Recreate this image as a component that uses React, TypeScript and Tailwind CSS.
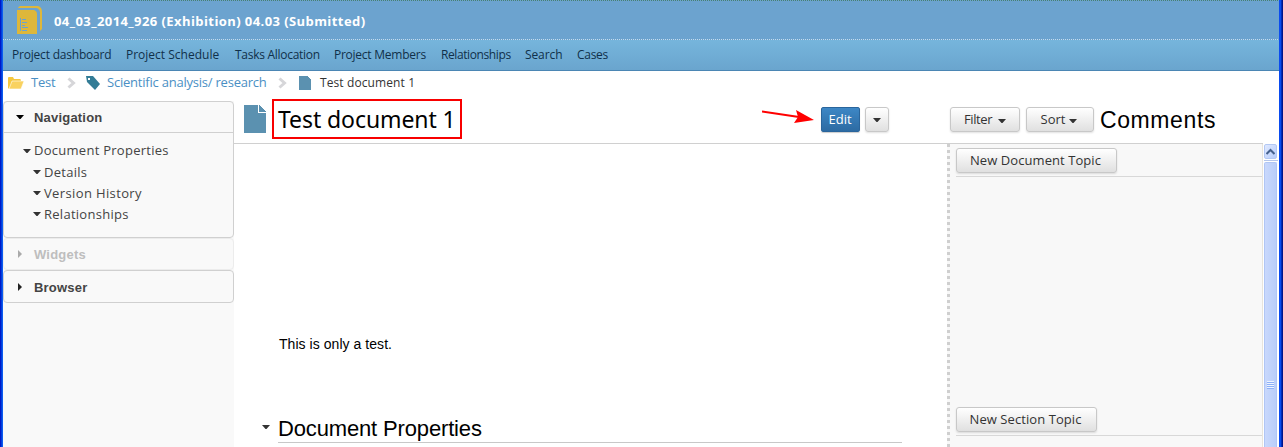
import React from "react";

const DocIcon = ({ className }: { className: string }) => (
  <svg className={className} viewBox="0 0 22 28" preserveAspectRatio="none" fill="#5b91b0" shapeRendering="crispEdges">
    <path d="M0 0H14V8H22V28H0ZM15 0L22 7H15Z" />
  </svg>
);

const Caret = ({ className = "", fill = "#333" }: { className?: string; fill?: string }) => (
  <svg className={`h-1 w-[8px] shrink-0 ${className}`} viewBox="0 0 8 4" fill={fill}>
    <path d="M0 0H8L4.5 4H3.5Z" />
  </svg>
);

const RightCaret = ({ fill }: { fill: string }) => (
  <svg className="ml-[14px] h-[8px] w-1 shrink-0" viewBox="0 0 4 8" fill={fill}>
    <path d="M0 0L4 4L0 8Z" />
  </svg>
);

const Chevron = () => (
  <svg className="h-[12px] w-[9px] shrink-0" viewBox="0 0 9 12" fill="none" stroke="#d6d6d9" strokeWidth="3">
    <path d="M1.5 1.5L6.5 6L1.5 10.5" />
  </svg>
);

const Button = ({ className, children }: { className: string; children: React.ReactNode }) => (
  <button
    className={`flex h-[25px] shrink-0 items-center justify-center rounded-[3px] border border-[#c8c8c8] bg-linear-to-b from-white to-[#e0e0e0] pt-px font-['Open_Sans',sans-serif] text-[13px] whitespace-nowrap text-[#333] shadow-[0_1px_2px_rgba(0,0,0,0.12)] ${className}`}
  >
    {children}
  </button>
);

const tabs = [
  { label: "Project dashboard", width: "w-[114px] tracking-[-0.2px]" },
  { label: "Project Schedule", width: "w-[109px]" },
  { label: "Tasks Allocation", width: "w-[99px] tracking-[-0.28px]" },
  { label: "Project Members", width: "w-[107px] tracking-[-0.25px]" },
  { label: "Relationships", width: "w-[84px] tracking-[-0.4px]" },
  { label: "Search", width: "w-[52px] tracking-[-0.1px]" },
  { label: "Cases", width: "w-[40px] tracking-[-0.3px]" },
];

export default function App() {
  return (
    <div className="flex h-[447px] w-[1283px] overflow-hidden bg-white font-['Open_Sans',sans-serif] text-[13px] text-[#333]">
      <div className="w-[3px] shrink-0 bg-linear-to-r from-[#0019c8] from-30% to-[#0c5bf0] to-70%" />
      <div className="flex w-[1276px] shrink-0 flex-col">
        <header className="flex h-10 shrink-0 items-center bg-[#6ca3cf] bg-[repeating-linear-gradient(90deg,#47806f_0_1px,#6ca3cf_1px_2px),repeating-linear-gradient(90deg,#c4dcee_0_1px,#6ca3cf_1px_2px)] bg-[length:100%_1px] bg-[position:0_0,0_39px] bg-no-repeat">
          <svg className="ml-[14px] h-7 w-[25px]" viewBox="0 0 25 28" fill="#deb73b">
            <path d="M3 0H21Q25 1 25 6V23L23 25V6Q22 2 19 2H1Q1 1 3 0Z" />
            <path fillRule="evenodd" d="M0 4H17Q20 5 20 8V28H0ZM3 12H4V25H3ZM5 13H9V14H5ZM5 16H10V17H5ZM5 19H8V20H5ZM5 21H11V22H5ZM5 24H10V25H5Z" />
          </svg>
          <h1 className="ml-[12px] pt-px text-[13px] leading-5 font-bold tracking-[0.42px] whitespace-nowrap text-white">
            04_03_2014_926 (Exhibition) 04.03 (Submitted)
          </h1>
        </header>
        <nav className="flex h-[31px] shrink-0 items-center border-b border-[#4b86b4] bg-linear-to-b from-[#76b5dc] to-[#6aa5ce] pl-[9px] text-[12px] text-[#10304a]">
          {tabs.map((t) => (
            <a key={t.label} className={`${t.width} shrink-0 whitespace-nowrap`}>{t.label}</a>
          ))}
        </nav>
        <div className="flex h-[30px] shrink-0 items-center pb-[6px] pl-[5px] whitespace-nowrap text-[#4a8fc4]">
          <svg className="h-3 w-4 shrink-0" viewBox="0 0 16 12">
            <path d="M0 1Q0 0 1 0H5L6 2H12Q13 2 13 4V12H1L0 11Z" fill="#f5c83f" />
            <path d="M4 4H16L13 12H1Z" fill="#f9d260" stroke="#fff" strokeWidth=".6" />
          </svg>
          <a className="ml-[7px] w-9 shrink-0 tracking-[-0.2px]">Test</a>
          <Chevron />
          <svg className="ml-[10px] h-[14px] w-[15px] shrink-0" viewBox="0 0 15 14">
            <path fillRule="evenodd" d="M0 0H7L14 8L9 14L1 6ZM2 2V4H4V2Z" fill="#337c96" />
          </svg>
          <a className="ml-[6px] w-[171px] shrink-0 tracking-[-0.22px]">Scientific analysis/ research</a>
          <Chevron />
          <DocIcon className="ml-[12px] h-[14px] w-3 shrink-0" />
          <span className="ml-[9px] text-[12px] tracking-[0.1px] text-[#333]">Test document 1</span>
        </div>
        <div className="flex min-h-0 flex-1">
          <aside className="w-[231px] shrink-0 bg-[#f9f9f9] text-[#444]">
            <section className="h-[137px] rounded border border-[#d0d0d0] whitespace-nowrap">
              <h2 className="flex h-[31px] items-center border-b border-[#d0d0d0] font-['Liberation_Sans',sans-serif] text-[13px] font-bold tracking-[0.2px]">
                <Caret className="ml-3" fill="#000" />
                <span className="ml-[10px] pt-[2px]">Navigation</span>
              </h2>
              <div className="pt-[7px] tracking-[0.27px]">
                <div className="flex h-[22px] items-center pl-[19px]"><Caret className="-mt-px" /><span className="ml-[3px]">Document Properties</span></div>
                <div className="flex h-[21px] items-center pl-[29px]"><Caret className="-mt-px" /><span className="ml-[3px]">Details</span></div>
                <div className="flex h-[21px] items-center pl-[29px] tracking-[0.37px]"><Caret className="-mt-px" /><span className="ml-[3px]">Version History</span></div>
                <div className="flex h-[21px] items-center pl-[29px]"><Caret className="-mt-px" /><span className="ml-[3px]">Relationships</span></div>
              </div>
            </section>
            <section className="flex h-8 items-center rounded border border-[#ececec] font-['Liberation_Sans',sans-serif] text-[13px] font-bold tracking-[0.2px] text-[#bebebe]">
              <RightCaret fill="#aaa" />
              <span className="ml-3 pt-[2px]">Widgets</span>
            </section>
            <section className="flex h-[33px] items-center rounded border border-[#d0d0d0] font-['Liberation_Sans',sans-serif] text-[13px] font-bold tracking-[0.2px]">
              <RightCaret fill="#222" />
              <span className="ml-3 pt-[2px]">Browser</span>
            </section>
          </aside>
          <div className="flex min-w-0 flex-1 flex-col">
            <div className="mr-[16px] flex h-[43px] shrink-0 items-start border-b border-[#d0d0d0] font-['Liberation_Sans',sans-serif]">
              <DocIcon className="mt-1 ml-[10px] h-7 w-[22px] shrink-0" />
              <div className="-mt-[2px] ml-[6px] flex h-10 w-[190px] shrink-0 items-center border-2 border-[#f80000] pl-1 font-['Noto_Sans',sans-serif] text-[23px] tracking-[-0.08px] whitespace-nowrap text-black">
                Test document 1
              </div>
              <svg className="mt-[9px] ml-[300px] h-[14px] w-[53px] shrink-0" viewBox="0 0 53 14">
                <path d="M0 1.5L37 7" stroke="#f00" strokeWidth="2" />
                <path d="M34 0L52 10L32 13L36 7Z" fill="#f00" />
              </svg>
              <button className="mt-[6px] ml-[6px] flex h-[25px] w-[39px] shrink-0 items-center justify-center rounded-[2px] border border-[#2a659c] bg-linear-to-b from-[#3d87c5] to-[#2d6ba3] pt-px pr-px font-['Open_Sans',sans-serif] text-white shadow-[0_1px_1px_rgba(0,0,0,0.2)]">Edit</button>
              <Button className="mt-[6px] ml-[5px] w-6"><Caret /></Button>
              <Button className="mt-[6px] ml-[61px] w-[70px] tracking-[-0.4px]">Filter<Caret className="mt-px ml-[6px]" /></Button>
              <Button className="mt-[6px] ml-[6px] w-[68px] pr-[2px]">Sort<Caret className="mt-px ml-1" /></Button>
              <h2 className="ml-[6px] pt-[5px] text-[23px] leading-7 tracking-[0.6px] whitespace-nowrap text-black">Comments</h2>
            </div>
            <div className="flex min-h-0 flex-1">
              <main className="w-[713px] shrink-0 font-['Liberation_Sans',sans-serif] text-black">
                <p className="mt-[190px] ml-[45px] text-[14px] leading-5 tracking-[0.05px] whitespace-nowrap">This is only a test.</p>
                <div className="mt-[58px] ml-[28px] flex h-8 items-center">
                  <Caret className="-mt-[2px]" />
                  <h2 className="ml-2 pt-[2px] text-[22px] leading-8 tracking-[-0.15px] whitespace-nowrap">Document Properties</h2>
                </div>
                <div className="mt-[-2px] ml-[44px] h-px w-[624px] bg-[#c8c8c8]" />
              </main>
              <div className="w-[3px] shrink-0 bg-[repeating-linear-gradient(180deg,#cfcfcf_0_3px,#f8f8f8_3px_6px)]" />
              <aside className="w-[312px] shrink-0 bg-[#f8f8f8] pl-[6px]">
                <div className="flex h-[33px] items-start border-b border-[#d8d8d8] pt-1"><Button className="w-[161px] pr-[2px] tracking-[0.07px]">New Document Topic</Button></div>
                <div className="mt-[226px] flex h-[33px] items-start border-b border-[#d8d8d8] pt-1"><Button className="w-[141px] pr-[2px] tracking-[0.07px]">New Section Topic</Button></div>
              </aside>
              <div className="flex flex-1 flex-col border-l border-[#e8e4dc] bg-white pl-px">
                <div className="flex h-[15px] w-[13px] items-center justify-center rounded-[2px] border border-[#b3c8f4] bg-linear-to-br from-[#e0e9ff] to-[#b6ccfb]">
                  <svg className="h-[7px] w-[9px]" viewBox="0 0 9 7" fill="none" stroke="#45618d" strokeWidth="2"><path d="M0.5 6L4.5 2L8.5 6" /></svg>
                </div>
                <div className="mt-px h-px w-[14px] bg-[#b5c6ea]" />
                <div className="mt-px w-[13px] flex-1 rounded-t-[2px] border-x border-t border-[#b0c6f5] bg-linear-to-r from-[#c9d8fc] to-[#b9cefa] pt-[218px] pl-[2px]">
                  <div className="h-2 w-[7px] bg-[repeating-linear-gradient(180deg,#eef4ff_0_1px,#8cb0f8_1px_2px)]" />
                </div>
              </div>
            </div>
          </div>
        </div>
      </div>
      <div className="w-1 shrink-0 bg-linear-to-r from-[#0a4bef] from-40% to-[#00138c] to-80%" />
    </div>
  );
}
